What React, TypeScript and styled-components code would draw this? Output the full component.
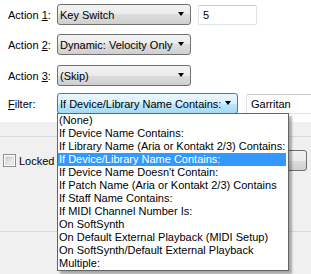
import styled, { createGlobalStyle } from "styled-components";

const GlobalStyle = createGlobalStyle`
  body {
    margin: 0;
    background: #f0f0f0;
    font-family: "Liberation Sans", Arial, sans-serif;
    font-size: 11px;
    color: #000000;
  }
`;

const filterOptions = [
  "(None)",
  "If Device Name Contains:",
  "If Library Name (Aria or Kontakt 2/3) Contains:",
  "If Device/Library Name Contains:",
  "If Device Name Doesn't Contain:",
  "If Patch Name (Aria or Kontakt 2/3) Contains",
  "If Staff Name Contains:",
  "If MIDI Channel Number Is:",
  "On SoftSynth",
  "On Default External Playback (MIDI Setup)",
  "On SoftSynth/Default External Playback",
  "Multiple:",
];

const SELECTED = 3;

const Screen = styled.div`
  position: relative;
  width: 311px;
  height: 274px;
  overflow: hidden;
  background: #f0f0f0;
`;

const TopPanel = styled.div`
  box-sizing: border-box;
  height: 122px;
  background: #ffffff;
  padding: 4px 0 0 8px;
  display: flex;
  flex-direction: column;
`;

const FieldRow = styled.div<{ $mt: number }>`
  display: flex;
  align-items: center;
  height: 21px;
  margin-top: ${(p) => p.$mt}px;
`;

const Label = styled.div`
  width: 49px;
  flex: none;
  white-space: nowrap;
  u {
    text-decoration: underline;
    text-underline-offset: 1px;
  }
`;

const Combo = styled.div<{ $width: number; $focused?: boolean }>`
  box-sizing: border-box;
  position: relative;
  width: ${(p) => p.$width}px;
  height: 21px;
  flex: none;
  display: flex;
  align-items: center;
  padding-left: 2px;
  border: 1px solid ${(p) => (p.$focused ? "#3c7fb1" : "#707070")};
  border-radius: 3px;
  background: ${(p) =>
    p.$focused
      ? "linear-gradient(#eaf6fd 0%, #d9f0fc 50%, #bee6fd 50%, #a7d9f5 100%)"
      : "linear-gradient(#f2f2f2 0%, #ebebeb 50%, #dddddd 50%, #cfcfcf 100%)"};
  white-space: nowrap;
`;

const Arrow = styled.span`
  position: absolute;
  right: 6px;
  top: 7px;
  width: 0;
  height: 0;
  border-left: 3.5px solid transparent;
  border-right: 3.5px solid transparent;
  border-top: 4px solid #000000;
`;

const TextBox = styled.div<{ $width: number; $ml: number }>`
  box-sizing: border-box;
  width: ${(p) => p.$width}px;
  height: 20px;
  flex: none;
  margin-left: ${(p) => p.$ml}px;
  padding-left: 4px;
  display: flex;
  align-items: center;
  background: #ffffff;
  border: 1px solid #e0e3e7;
  border-top-color: #c9cbcf;
  border-radius: 2px;
  white-space: nowrap;
`;

const Strip = styled.div`
  height: 14px;
  border-bottom: 1px solid #d6dbe0;
`;

const Panel = styled.div`
  box-sizing: border-box;
  height: 95px;
  padding-top: 13px;
  border-bottom: 1px solid #d6dbe0;
`;

const CheckRow = styled.div`
  display: flex;
  align-items: center;
  height: 21px;
  padding-left: 3px;
`;

const CheckBox = styled.span`
  box-sizing: border-box;
  width: 13px;
  height: 13px;
  border: 1px solid #8e8f8f;
  background: #ffffff;
  padding: 1px;
  display: flex;
  &::after {
    content: "";
    flex: 1;
    background: linear-gradient(135deg, #cbcbcb, #f6f6f6);
    border: 1px solid #e2e2e2;
  }
`;

const CheckLabel = styled.span`
  margin-left: 3px;
`;

const Button = styled.div`
  box-sizing: border-box;
  margin-left: auto;
  margin-right: 4px;
  width: 90px;
  height: 21px;
  border: 1px solid #707070;
  border-radius: 3px;
  background: linear-gradient(#f2f2f2 0%, #ebebeb 50%, #dddddd 50%, #cfcfcf 100%);
`;

const DropList = styled.ul`
  position: absolute;
  left: 57px;
  top: 113px;
  width: 232px;
  box-sizing: border-box;
  margin: 0;
  padding: 0 0 0 0;
  list-style: none;
  background: #ffffff;
  border: 1px solid #646464;
  box-shadow: 3px 3px 2px rgba(0, 0, 0, 0.3);
`;

const Option = styled.li<{ $selected?: boolean }>`
  height: 13px;
  line-height: 13px;
  padding-left: 1px;
  margin-right: 2px;
  white-space: nowrap;
  background: ${(p) => (p.$selected ? "#3399ff" : "transparent")};
  color: ${(p) => (p.$selected ? "#ffffff" : "#000000")};
`;

export default function App() {
  return (
    <Screen>
      <GlobalStyle />
      <TopPanel>
        <FieldRow $mt={0}>
          <Label>
            Action <u>1</u>:
          </Label>
          <Combo $width={134}>
            Key Switch
            <Arrow />
          </Combo>
          <TextBox $width={59} $ml={7}>
            5
          </TextBox>
        </FieldRow>
        <FieldRow $mt={9}>
          <Label>
            Action <u>2</u>:
          </Label>
          <Combo $width={134}>
            Dynamic: Velocity Only
            <Arrow />
          </Combo>
        </FieldRow>
        <FieldRow $mt={10}>
          <Label>
            Action <u>3</u>:
          </Label>
          <Combo $width={134}>
            (Skip)
            <Arrow />
          </Combo>
        </FieldRow>
        <FieldRow $mt={7}>
          <Label>
            <u>F</u>ilter:
          </Label>
          <Combo $width={181} $focused>
            If Device/Library Name Contains:
            <Arrow />
          </Combo>
          <TextBox $width={80} $ml={8}>
            Garritan
          </TextBox>
        </FieldRow>
      </TopPanel>
      <Strip />
      <Panel>
        <CheckRow>
          <CheckBox />
          <CheckLabel>Locked</CheckLabel>
          <Button />
        </CheckRow>
      </Panel>
      <DropList>
        {filterOptions.map((opt, i) => (
          <Option key={opt} $selected={i === SELECTED}>
            {opt}
          </Option>
        ))}
      </DropList>
    </Screen>
  );
}
